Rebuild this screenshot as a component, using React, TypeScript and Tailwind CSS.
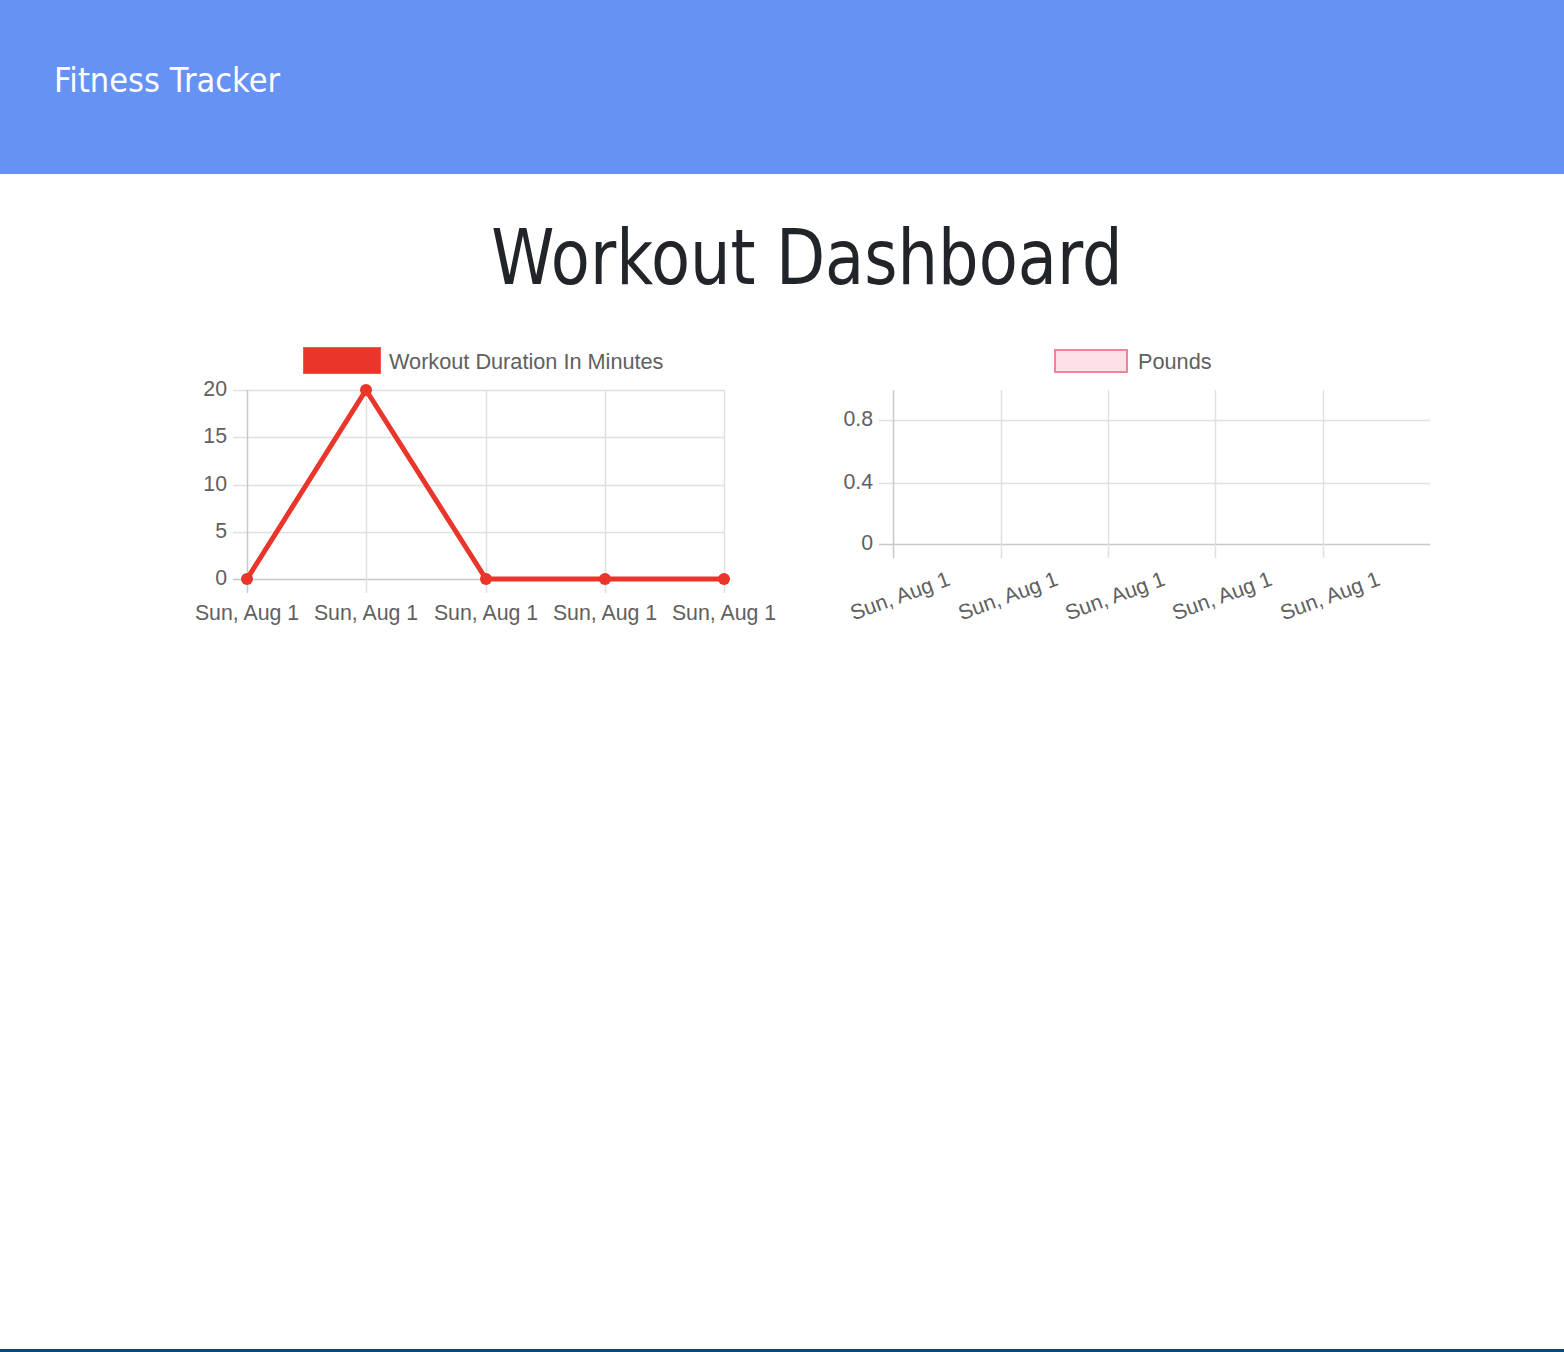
import React from "react";

const GRID = "#e0e0e0";
const AXIS = "#c8c8c8";
const LABEL = "#606060";
const RED = "#e9352a";

function DurationChart() {
  const xs = [71, 190, 310, 429, 548];
  const ys = [60, 107, 155, 202, 249];
  const yLabels = ["20", "15", "10", "5", "0"];
  const data = [0, 20, 0, 0, 0];
  const toY = (v: number) => 249 - (v / 20) * 189;
  const pts = data.map((v, i) => `${xs[i]},${toY(v)}`).join(" ");
  return (
    <svg width={620} height={300} viewBox="0 0 620 300" style={{ fontFamily: '"Liberation Sans", Arial, sans-serif' }}>
      <rect x={127.5} y={17.5} width={77} height={26} fill={RED} stroke="#ee5a50" strokeWidth={1} />
      <text x={213} y={31} fontSize={21.7} fill={LABEL} dominantBaseline="central">
        Workout Duration In Minutes
      </text>
      {ys.map((y, i) => (
        <line key={`h${i}`} x1={57} x2={548} y1={y + 0.5} y2={y + 0.5} stroke={i === 4 ? AXIS : GRID} strokeWidth={1.5} />
      ))}
      {xs.map((x, i) => (
        <line key={`v${i}`} x1={x + 0.5} x2={x + 0.5} y1={60} y2={263} stroke={i === 0 ? AXIS : GRID} strokeWidth={1.5} />
      ))}
      {yLabels.map((l, i) => (
        <text key={`yl${i}`} x={51} y={ys[i] - 1} fontSize={21.3} fill={LABEL} textAnchor="end" dominantBaseline="central">
          {l}
        </text>
      ))}
      {xs.map((x, i) => (
        <text key={`xl${i}`} x={x} y={290} fontSize={21.3} fill={LABEL} textAnchor="middle">
          Sun, Aug 1
        </text>
      ))}
      <polyline points={pts} fill="none" stroke={RED} strokeWidth={5} strokeLinejoin="round" />
      {data.map((v, i) => (
        <circle key={`p${i}`} cx={xs[i]} cy={toY(v)} r={6} fill={RED} />
      ))}
    </svg>
  );
}

function PoundsChart() {
  const xs = [67, 175, 282, 389, 497];
  const ys = [90, 153, 214];
  const yLabels = ["0.8", "0.4", "0"];
  return (
    <svg width={630} height={300} viewBox="0 0 630 300" style={{ fontFamily: '"Liberation Sans", Arial, sans-serif' }}>
      <rect x={229} y={20} width={72} height={22} fill="#fde1e6" stroke="#f2829a" strokeWidth={2} />
      <text x={312} y={31} fontSize={21.7} fill={LABEL} dominantBaseline="central">
        Pounds
      </text>
      {ys.map((y, i) => (
        <line key={`h${i}`} x1={53} x2={604} y1={y + 0.5} y2={y + 0.5} stroke={i === 2 ? AXIS : GRID} strokeWidth={1.5} />
      ))}
      {xs.map((x, i) => (
        <line key={`v${i}`} x1={x + 0.5} x2={x + 0.5} y1={60} y2={228} stroke={i === 0 ? AXIS : GRID} strokeWidth={1.5} />
      ))}
      {yLabels.map((l, i) => (
        <text key={`yl${i}`} x={47} y={ys[i] - 1} fontSize={21.3} fill={LABEL} textAnchor="end" dominantBaseline="central">
          {l}
        </text>
      ))}
      {xs.map((x, i) => (
        <text
          key={`xl${i}`}
          x={0}
          y={0}
          fontSize={21.3}
          fill={LABEL}
          textAnchor="middle"
          dominantBaseline="central"
          transform={`translate(${x + 7},${266}) rotate(-20)`}
        >
          Sun, Aug 1
        </text>
      ))}
    </svg>
  );
}

export default function App() {
  return (
    <div className="flex min-h-[1352px] flex-col bg-white">
      <header className="h-[174px] bg-[#6592f3] pl-[54px] pt-[63px]">
        <div className="origin-left scale-x-[0.9] font-['DejaVu_Sans',sans-serif] text-[34px] leading-none text-white">
          Fitness Tracker
        </div>
      </header>
      <main className="flex flex-col">
        <div className="mt-[45px] pl-[50px]">
          <h1 className="scale-x-[0.83] text-center font-['DejaVu_Sans',sans-serif] text-[77px] leading-none font-normal text-[#212529]">
            Workout Dashboard
          </h1>
        </div>
        <div className="mt-[34px] flex gap-[30px] pl-[176px]">
          <DurationChart />
          <PoundsChart />
        </div>
      </main>
      <div className="mt-auto h-[3px] bg-[#0c4876]" />
    </div>
  );
}
